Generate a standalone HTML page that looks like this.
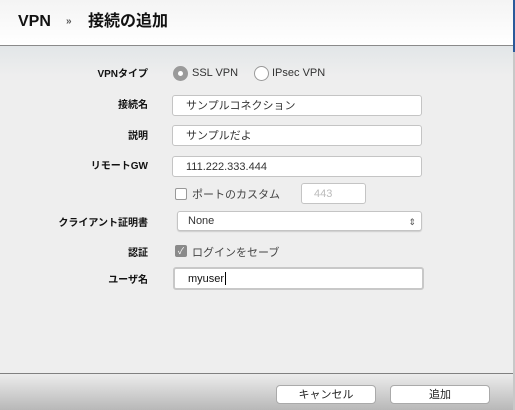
<!DOCTYPE html>
<html><head><meta charset="utf-8"><style>
*{margin:0;padding:0;box-sizing:border-box}
body{width:515px;height:410px;overflow:hidden;background:#eeeeee;font-family:"Liberation Sans","Noto Sans CJK JP",sans-serif;position:relative;color:#222}
.hdr{position:absolute;left:0;top:0;width:513px;height:46px;background:linear-gradient(#f4f4f4,#fff);border-bottom:1px solid #8a8a8a}
.hdr span{position:absolute;top:13px;font-size:16px;font-weight:bold;color:#111;line-height:18px}
.vl{position:absolute;left:513px;top:0;width:2px;height:410px;background:#c8c8c8}
.vl:before{content:"";position:absolute;left:0;top:0;width:2px;height:52px;background:#2a5a9a}
.body{position:absolute;left:0;top:46px;width:513px;height:327px;background:linear-gradient(#e2e6e8,#eeeeee 30px)}
.lbl{position:absolute;right:367px;font-size:10px;line-height:12px;font-weight:bold;color:#111;white-space:nowrap}
.in{position:absolute;background:#fff;border:1px solid #c4c4c4;border-radius:3px;font-size:11px;padding-left:13px;color:#333;display:flex;align-items:center;line-height:12px}
.t{position:absolute;font-size:11px;line-height:13px;color:#333;white-space:nowrap}
.ft{position:absolute;left:0;top:373px;width:513px;height:37px;border-top:1px solid #808080;background:linear-gradient(#ececec,#b8b8b8)}
.btn{position:absolute;top:11px;width:100px;height:19px;background:#fff;border:1px solid #aaa;border-radius:4px;font-size:11px;line-height:12px;color:#222;display:flex;align-items:center;justify-content:center}
</style></head><body>
<div class="hdr"><span style="left:18px">VPN</span><span style="left:66px;font-size:10px;top:13px;color:#555">»</span><span style="left:88px">接続の追加</span></div>
<div class="body"></div>
<div class="vl"></div>
<div class="lbl" style="top:69px">VPNタイプ</div>
<div style="position:absolute;left:173px;top:66px;width:15px;height:15px;border-radius:50%;background:#9a9a9a"><div style="position:absolute;left:5px;top:5px;width:5px;height:5px;border-radius:50%;background:#fff"></div></div>
<div class="t" style="left:192px;top:67px">SSL VPN</div>
<div style="position:absolute;left:254px;top:66px;width:15px;height:15px;border-radius:50%;background:#fff;border:1px solid #999"></div>
<div class="t" style="left:272px;top:67px">IPsec VPN</div>
<div class="lbl" style="top:100px">接続名</div>
<div class="in" style="left:172px;top:95px;width:250px;height:21px">サンプルコネクション</div>
<div class="lbl" style="top:131px">説明</div>
<div class="in" style="left:172px;top:125px;width:250px;height:21px">サンプルだよ</div>
<div class="lbl" style="top:161px">リモートGW</div>
<div class="in" style="left:172px;top:156px;width:250px;height:21px">111.222.333.444</div>
<div style="position:absolute;left:175px;top:188px;width:12px;height:12px;border:1px solid #999;border-radius:2px;background:#fff"></div>
<div class="t" style="left:192px;top:189px;color:#444">ポートのカスタム</div>
<div class="in" style="left:301px;top:183px;width:65px;height:21px;color:#bbb;padding-left:12px">443</div>
<div class="lbl" style="top:218px">クライアント証明書</div>
<div class="in" style="left:177px;top:211px;width:245px;height:20px;padding-left:10px;box-shadow:0 1px 1px #ccc;padding-bottom:1px">None<span style="position:absolute;right:5px;top:4px;font-size:9px;color:#555">⇕</span></div>
<div class="lbl" style="top:248px">認証</div>
<div style="position:absolute;left:175px;top:245px;width:12px;height:12px;border-radius:2px;background:#8a8a8a;color:#fff;font-size:9px;line-height:12px;text-align:center">✓</div>
<div class="t" style="left:192px;top:247px;color:#444">ログインをセーブ</div>
<div class="lbl" style="top:275px">ユーザ名</div>
<div class="in" style="left:173px;top:267px;width:251px;height:23px;border:2px solid #c8c8c8;color:#111;padding-left:13px">myuser<span style="border-left:1px solid #000;margin-left:1px;height:13px"></span></div>
<div class="ft"><div class="btn" style="left:276px">キャンセル</div><div class="btn" style="left:390px">追加</div></div>
</body></html>
